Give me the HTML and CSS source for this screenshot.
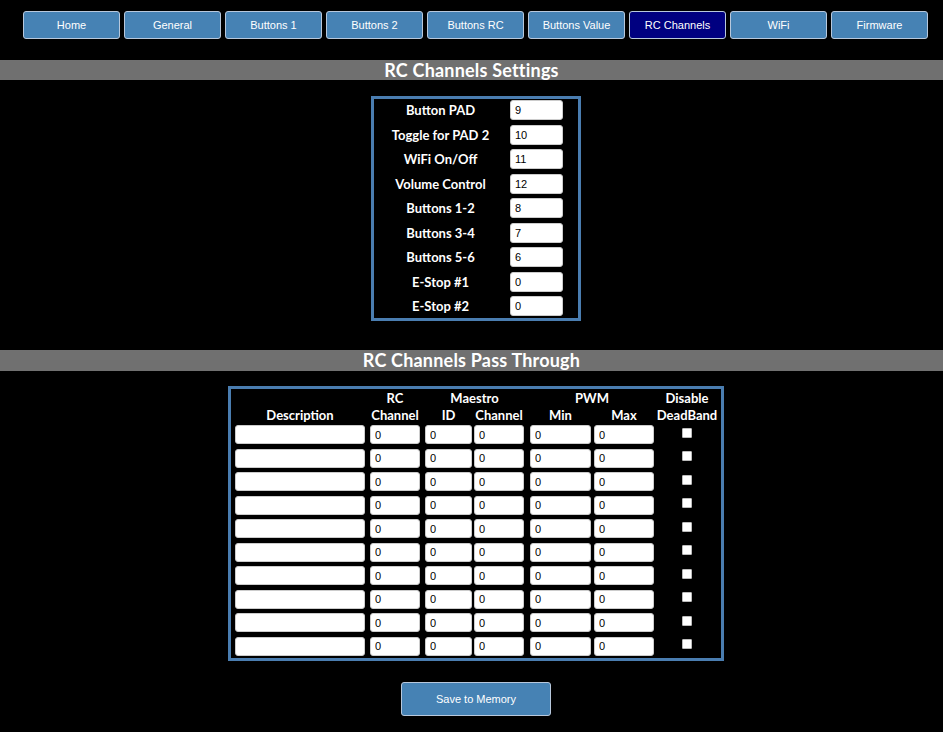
FILE: index.html
```html
<!DOCTYPE html>
<html>
<head>
<meta charset="utf-8">
<link rel="stylesheet" href="styles.css">
</head>
<body>
<nav class="nav">
  <button class="tab">Home</button>
  <button class="tab">General</button>
  <button class="tab">Buttons 1</button>
  <button class="tab">Buttons 2</button>
  <button class="tab">Buttons RC</button>
  <button class="tab">Buttons Value</button>
  <button class="tab active">RC Channels</button>
  <button class="tab">WiFi</button>
  <button class="tab">Firmware</button>
</nav>

<h2 class="bar bar-first">RC Channels Settings</h2>

<div class="settings">
  <span class="lbl">Button PAD</span><input class="num" value="9">
  <span class="lbl">Toggle for PAD 2</span><input class="num" value="10">
  <span class="lbl">WiFi On/Off</span><input class="num" value="11">
  <span class="lbl">Volume Control</span><input class="num" value="12">
  <span class="lbl">Buttons 1-2</span><input class="num" value="8">
  <span class="lbl">Buttons 3-4</span><input class="num" value="7">
  <span class="lbl">Buttons 5-6</span><input class="num" value="6">
  <span class="lbl">E-Stop #1</span><input class="num" value="0">
  <span class="lbl">E-Stop #2</span><input class="num" value="0">
</div>

<h2 class="bar bar-second">RC Channels Pass Through</h2>

<div class="pass">
  <div class="row head">
    <span class="c1"></span>
    <span class="c2">RC</span>
    <span class="cm">Maestro</span>
    <span class="cp">PWM</span>
    <span class="c7">Disable</span>
  </div>
  <div class="row head">
    <span class="c1">Description</span>
    <span class="c2">Channel</span>
    <span class="c3">ID</span>
    <span class="c4">Channel</span>
    <span class="c5">Min</span>
    <span class="c6">Max</span>
    <span class="c7">DeadBand</span>
  </div>
  <div class="row data"><input class="c1"><input class="c2" value="0"><input class="c3" value="0"><input class="c4" value="0"><input class="c5" value="0"><input class="c6" value="0"><span class="c7"><input type="checkbox" class="chk"></span></div>
  <div class="row data"><input class="c1"><input class="c2" value="0"><input class="c3" value="0"><input class="c4" value="0"><input class="c5" value="0"><input class="c6" value="0"><span class="c7"><input type="checkbox" class="chk"></span></div>
  <div class="row data"><input class="c1"><input class="c2" value="0"><input class="c3" value="0"><input class="c4" value="0"><input class="c5" value="0"><input class="c6" value="0"><span class="c7"><input type="checkbox" class="chk"></span></div>
  <div class="row data"><input class="c1"><input class="c2" value="0"><input class="c3" value="0"><input class="c4" value="0"><input class="c5" value="0"><input class="c6" value="0"><span class="c7"><input type="checkbox" class="chk"></span></div>
  <div class="row data"><input class="c1"><input class="c2" value="0"><input class="c3" value="0"><input class="c4" value="0"><input class="c5" value="0"><input class="c6" value="0"><span class="c7"><input type="checkbox" class="chk"></span></div>
  <div class="row data"><input class="c1"><input class="c2" value="0"><input class="c3" value="0"><input class="c4" value="0"><input class="c5" value="0"><input class="c6" value="0"><span class="c7"><input type="checkbox" class="chk"></span></div>
  <div class="row data"><input class="c1"><input class="c2" value="0"><input class="c3" value="0"><input class="c4" value="0"><input class="c5" value="0"><input class="c6" value="0"><span class="c7"><input type="checkbox" class="chk"></span></div>
  <div class="row data"><input class="c1"><input class="c2" value="0"><input class="c3" value="0"><input class="c4" value="0"><input class="c5" value="0"><input class="c6" value="0"><span class="c7"><input type="checkbox" class="chk"></span></div>
  <div class="row data"><input class="c1"><input class="c2" value="0"><input class="c3" value="0"><input class="c4" value="0"><input class="c5" value="0"><input class="c6" value="0"><span class="c7"><input type="checkbox" class="chk"></span></div>
  <div class="row data"><input class="c1"><input class="c2" value="0"><input class="c3" value="0"><input class="c4" value="0"><input class="c5" value="0"><input class="c6" value="0"><span class="c7"><input type="checkbox" class="chk"></span></div>
</div>

<div class="actions">
  <button class="save">Save to Memory</button>
</div>
</body>
</html>
```

FILE: styles.css
```css
html, body {
  margin: 0;
  padding: 0;
  background: #000;
}
body {
  font-family: "Lato", "Open Sans", sans-serif;
  color: #fff;
}
.nav {
  display: flex;
  gap: 4px;
  padding: 11px 0 0 23px;
}
.tab {
  width: 97px;
  height: 28px;
  box-sizing: border-box;
  background: #4682b4;
  border: 1px solid #b8c8dc;
  border-radius: 3px;
  color: #fff;
  font-family: "Liberation Sans", Arial, sans-serif;
  font-size: 11px;
  padding: 0;
}
.tab.active {
  background: #000080;
}
.bar {
  margin: 0;
  background: #707070;
  height: 20px;
  line-height: 20px;
  font-size: 18px;
  font-weight: 700;
  letter-spacing: 0.2px;
  text-align: center;
  color: #fff;
}
.bar-first {
  margin-top: 21px;
}
.bar-second {
  margin-top: 29px;
  height: 21px;
}
.settings {
  width: 210px;
  box-sizing: border-box;
  margin: 16px 0 0 371px;
  border: 3px solid #4a7db0;
  padding: 0 0 1px 0;
  display: grid;
  grid-template-columns: 133px 53px;
  grid-auto-rows: 22px;
  row-gap: 2.5px;
  column-gap: 3px;
  align-items: center;
}
.lbl {
  text-align: center;
  font-size: 13px;
  font-weight: 700;
}
.num {
  width: 53px;
  height: 20px;
  box-sizing: border-box;
  border: 1px solid #ccc;
  border-radius: 3px;
  background: #fff;
  font-family: "Liberation Sans", Arial, sans-serif;
  font-size: 11px;
  padding: 0 0 0 4px;
  color: #000;
}
.pass {
  width: 496px;
  box-sizing: border-box;
  margin: 15px 0 0 228px;
  border: 3px solid #4a7db0;
  padding: 0 0 0 4px;
}
.row {
  display: flex;
  align-items: center;
}
.head {
  height: 17px;
  font-size: 13px;
  font-weight: 700;
}
.head span {
  text-align: center;
}
.data {
  height: 23.5px;
}
.data input.c1, .data input.c2, .data input.c3, .data input.c4, .data input.c5, .data input.c6 {
  height: 19px;
  box-sizing: border-box;
  border: 1px solid #ccc;
  border-radius: 3px;
  background: #fff;
  font-family: "Liberation Sans", Arial, sans-serif;
  font-size: 11px;
  padding: 0 0 0 4px;
  color: #000;
}
.c1 { width: 130px; flex: none; }
.c2 { width: 50px; margin-left: 5px; flex: none; }
.c3 { width: 47px; margin-left: 5px; flex: none; }
.c4 { width: 50px; margin-left: 2px; flex: none; }
.c5 { width: 61px; margin-left: 6px; flex: none; }
.c6 { width: 60px; margin-left: 3px; flex: none; }
.c7 { width: 60px; margin-left: 3px; flex: none; text-align: center; display: flex; justify-content: center; }
.cm { width: 99px; margin-left: 5px; flex: none; }
.cp { width: 124px; margin-left: 6px; flex: none; }
.chk {
  appearance: none;
  -webkit-appearance: none;
  width: 10px;
  height: 10px;
  margin: 0 0 4px 0;
  background: #fff;
  border: 1px solid #bbb;
  border-radius: 1px;
}
.actions {
  padding: 21px 0 0 401px;
}
.save {
  width: 150px;
  height: 34px;
  box-sizing: border-box;
  background: #4682b4;
  border: 1px solid #b8c8dc;
  border-radius: 3px;
  color: #fff;
  font-family: "Liberation Sans", Arial, sans-serif;
  font-size: 11px;
}
```
